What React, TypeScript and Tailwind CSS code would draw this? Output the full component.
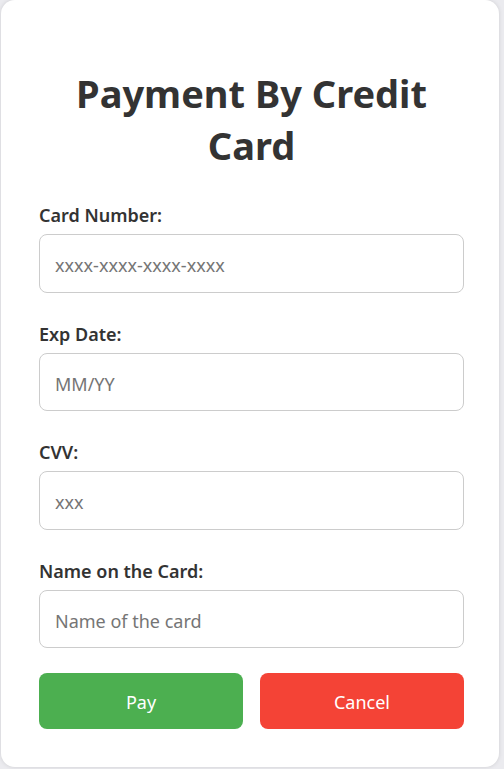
import React from "react";

const fields = [
  { label: "Card Number:", placeholder: "xxxx-xxxx-xxxx-xxxx" },
  { label: "Exp Date:", placeholder: "MM/YY" },
  { label: "CVV:", placeholder: "xxx" },
  { label: "Name on the Card:", placeholder: "Name of the card" },
];

export default function App() {
  return (
    <div
      className="min-h-[769px] w-[504px] bg-[#ebebef] flex flex-col"
      style={{ fontFamily: '"Noto Sans", "Open Sans", sans-serif' }}
    >
      <div className="ml-[1px] w-[498px] h-[767px] bg-white rounded-[14px] shadow-[0_0_4px_rgba(0,0,0,0.12)] pl-[38px] pr-[35px] pt-[67px] flex flex-col">
        <h1 className="text-[38px] leading-[52px] font-bold text-[#333] text-center">
          Payment By Credit Card
        </h1>
        <div className="mt-[33px] flex flex-col gap-[30px]">
          {fields.map((f) => (
            <div key={f.label} className="flex flex-col gap-[8px]">
              <label className="text-[18px] leading-[22px] font-semibold text-[#333]">
                {f.label}
              </label>
              <input
                className="h-[58.5px] w-full rounded-[8px] border border-[#cccccc] px-[15px] pt-[4px] text-[18px] text-[#333] placeholder:text-[#757575] outline-none"
                placeholder={f.placeholder}
              />
            </div>
          ))}
        </div>
        <div className="mt-[25px] flex gap-[17px]">
          <button className="flex-1 h-[56px] rounded-[8px] bg-[#4caf50] text-white text-[18px] pt-[2px]">
            Pay
          </button>
          <button className="flex-1 h-[56px] rounded-[8px] bg-[#f44336] text-white text-[18px] pt-[2px]">
            Cancel
          </button>
        </div>
      </div>
    </div>
  );
}
